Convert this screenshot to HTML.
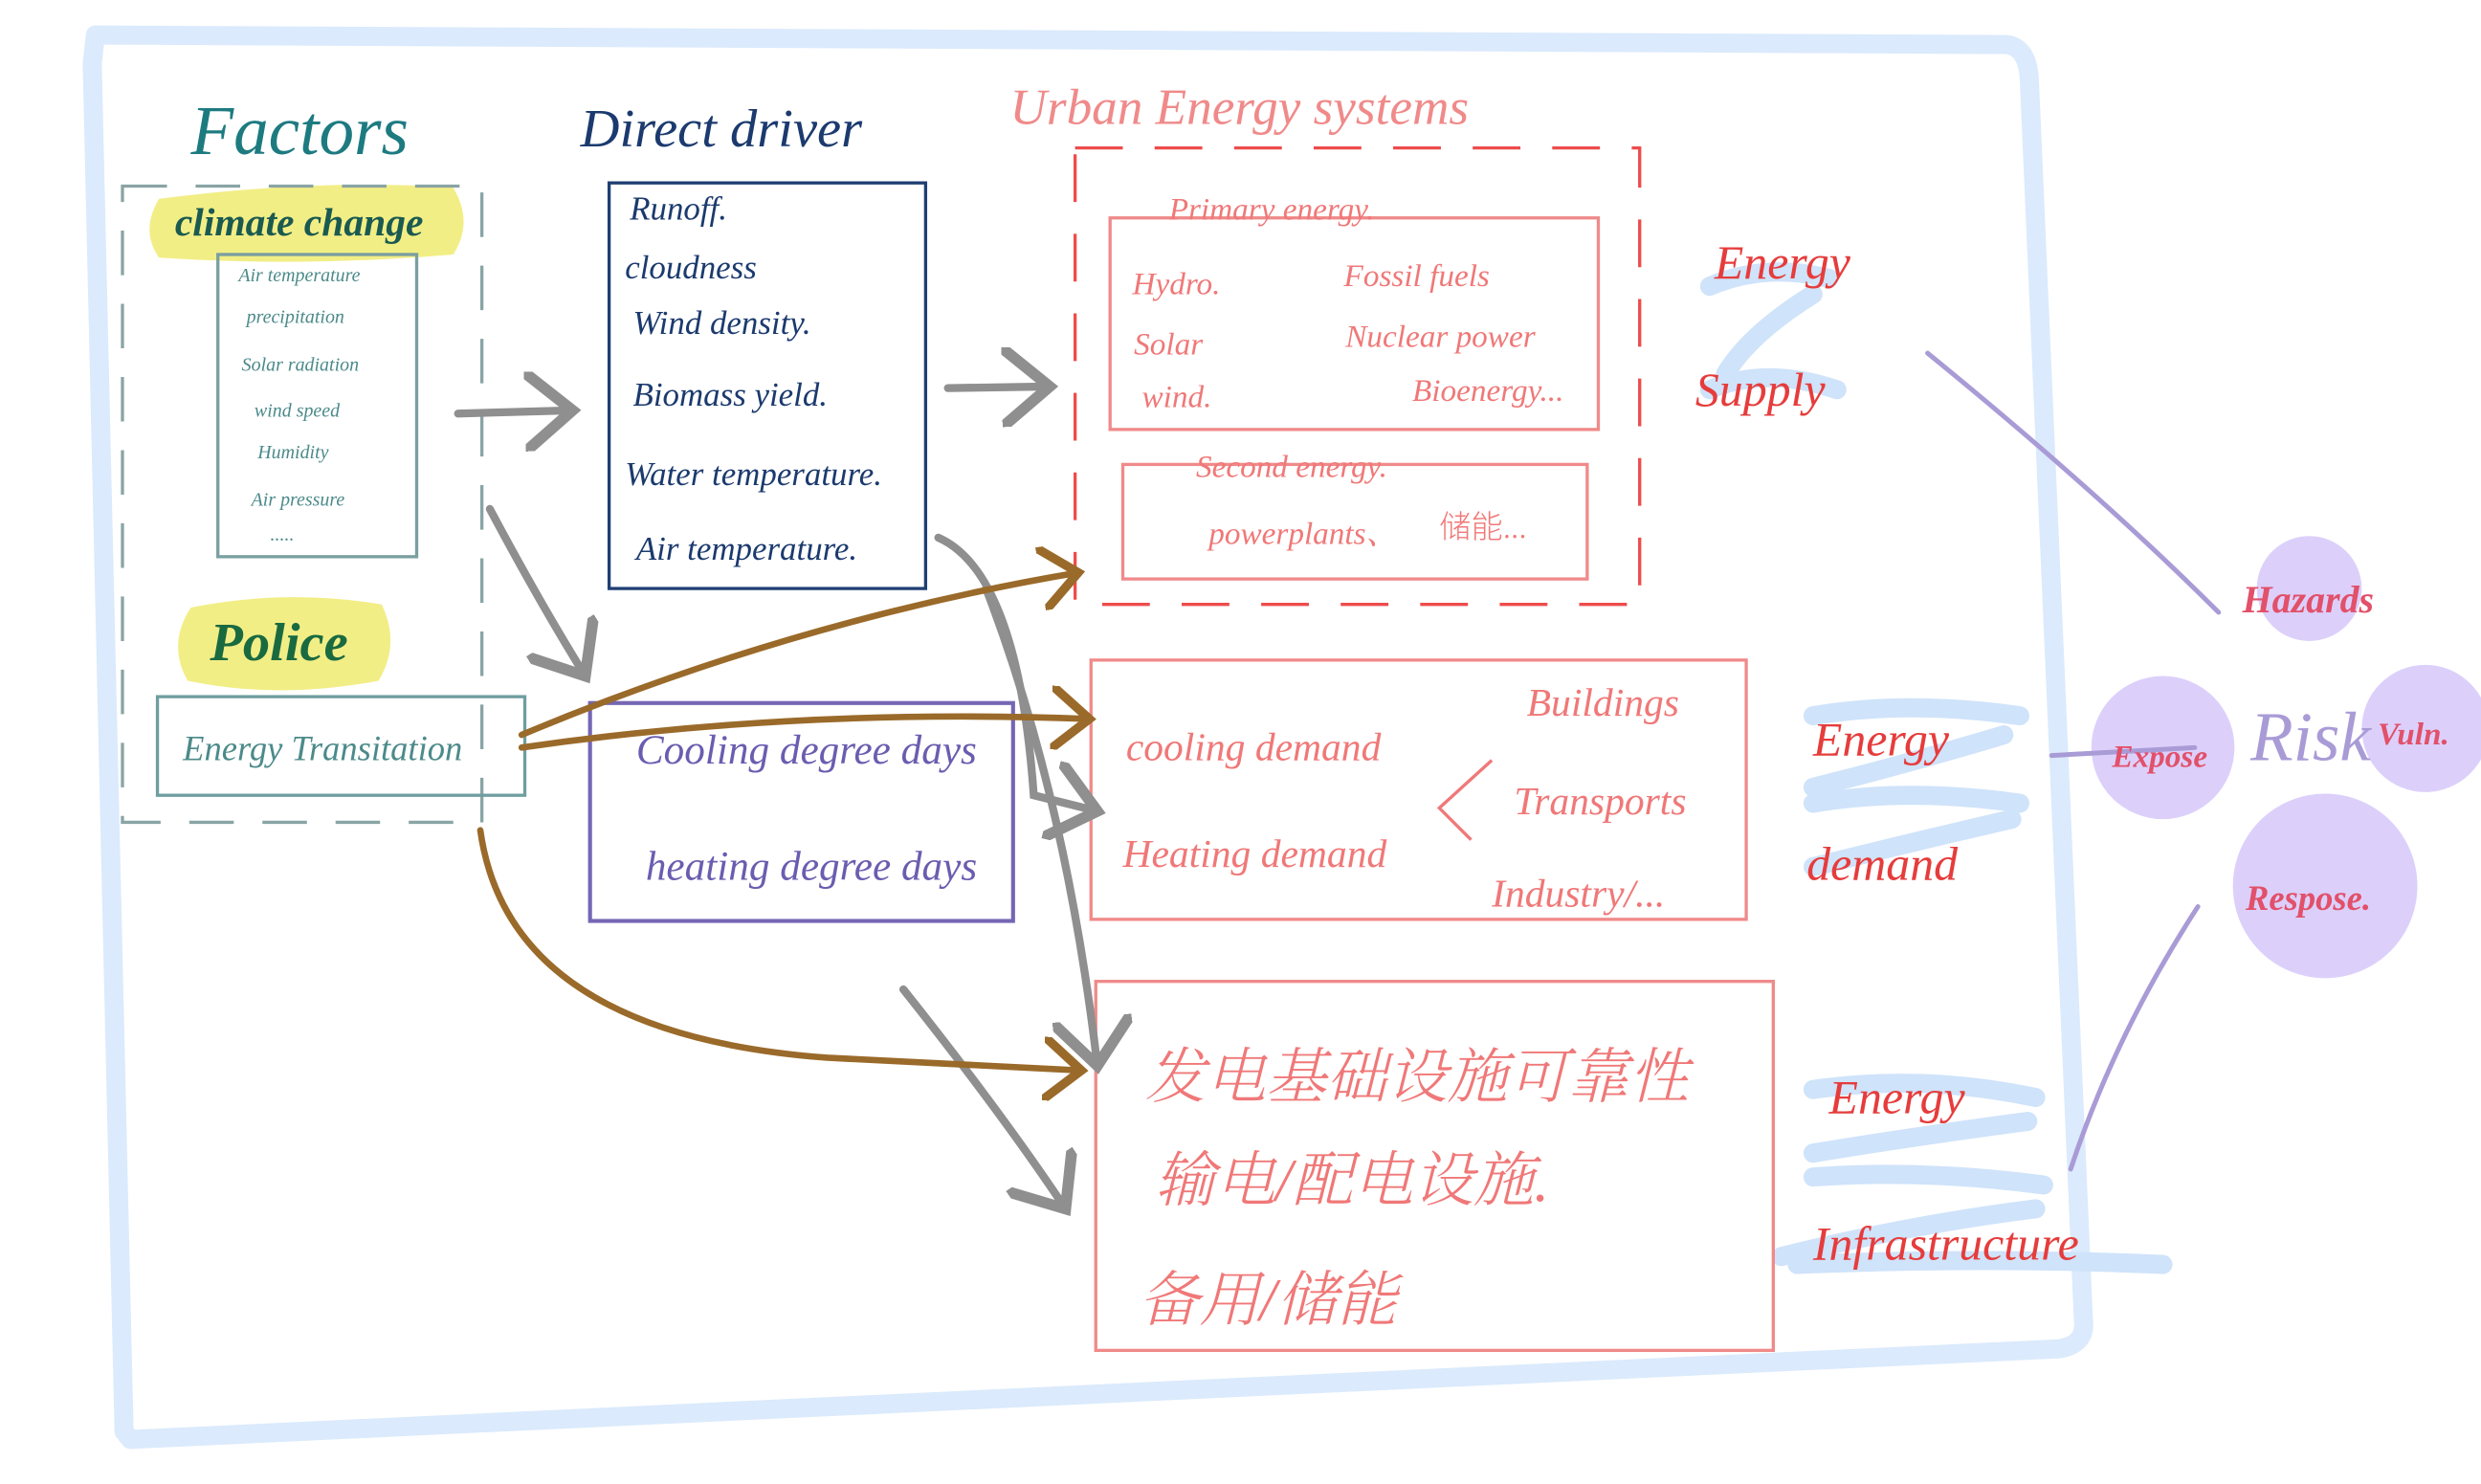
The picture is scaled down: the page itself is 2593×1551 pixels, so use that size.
<!DOCTYPE html>
<html><head><meta charset="utf-8"><style>
html,body{margin:0;padding:0;background:#fff;}
svg{display:block;}
text{font-family:"Liberation Serif","Noto Serif CJK SC",serif;font-style:italic;}
.cjk{font-family:"Noto Sans CJK SC","WenQuanYi Zen Hei",sans-serif;font-style:normal;font-weight:300;}
</style></head><body>
<svg width="2593" height="1551" viewBox="0 0 1560 933" preserveAspectRatio="none" xmlns="http://www.w3.org/2000/svg">
<defs>
<marker id="ag" markerWidth="10" markerHeight="10" refX="6" refY="5" orient="auto" markerUnits="strokeWidth"><path d="M0,0 L6,5 L0,10" fill="none" stroke="#8f8f8f" stroke-width="1.4"/></marker>
<marker id="ab" markerWidth="10" markerHeight="10" refX="6" refY="5" orient="auto" markerUnits="strokeWidth"><path d="M0,0 L6,5 L0,10" fill="none" stroke="#9a6a2a" stroke-width="1.4"/></marker>
</defs>
<!-- outer frame -->
<path d="M60,22 L1262,28 Q1275,30 1276,50 L1310,830 Q1312,845 1295,848 L82,905 L78,900 L58,40 Z" fill="none" stroke="#dbeafc" stroke-width="12" stroke-linejoin="round"/>
<!-- highlights -->
<path d="M100,125 Q200,112 285,118 Q298,140 285,160 Q190,168 100,162 Q88,145 100,125Z" fill="#f2ee86"/>
<path d="M120,382 Q180,370 240,380 Q252,405 238,428 Q175,440 118,428 Q105,405 120,382Z" fill="#f2ee86"/>
<!-- blue scribbles -->
<g fill="none" stroke="#cfe3fa" stroke-width="12" stroke-linecap="round">
<path d="M1075,180 Q1110,165 1150,175 M1140,185 Q1100,210 1085,235 M1075,245 Q1110,230 1155,245"/>
<path d="M1140,450 Q1200,440 1270,450 M1260,462 Q1200,480 1140,495 M1140,505 Q1200,495 1270,505 M1265,515 Q1200,530 1140,545"/>
<path d="M1140,685 Q1210,675 1280,690 M1275,705 Q1200,715 1140,725 M1140,740 Q1210,735 1285,745 M1280,760 Q1200,770 1120,790 M1130,795 Q1250,790 1360,795"/>
</g>
<!-- purple circles -->
<g fill="#dcd0fb">
<circle cx="1452" cy="370" r="33"/><circle cx="1360" cy="470" r="45"/><circle cx="1525" cy="458" r="40"/><circle cx="1462" cy="557" r="58"/>
</g>
<g fill="none" stroke="#a99bd6" stroke-width="3" stroke-linecap="round">
<path d="M1212,222 Q1320,310 1395,385"/><path d="M1382,570 Q1330,650 1302,735"/><path d="M1290,475 L1380,470"/>
</g>
<!-- left boxes -->
<rect x="77" y="117" width="226" height="400" fill="none" stroke="#8aa4a4" stroke-width="2" stroke-dasharray="28,18"/>
<rect x="137" y="160" width="125" height="190" fill="none" stroke="#7a9fa0" stroke-width="2"/>
<rect x="99" y="438" width="231" height="62" fill="none" stroke="#6f9ea0" stroke-width="2"/>
<rect x="383" y="115" width="199" height="255" fill="none" stroke="#1f3f74" stroke-width="2"/>
<rect x="371" y="442" width="266" height="137" fill="none" stroke="#7566b4" stroke-width="2.5"/>
<rect x="676" y="93" width="355" height="287" fill="none" stroke="#ee4c4c" stroke-width="2" stroke-dasharray="30,20"/>
<rect x="698" y="137" width="307" height="133" fill="none" stroke="#f08a8a" stroke-width="2"/>
<rect x="706" y="292" width="292" height="72" fill="none" stroke="#f08a8a" stroke-width="2"/>
<rect x="686" y="415" width="412" height="163" fill="none" stroke="#f08a8a" stroke-width="2"/>
<rect x="689" y="617" width="426" height="232" fill="none" stroke="#f08a8a" stroke-width="2"/>
<!-- arrows gray -->
<g fill="none" stroke="#8f8f8f" stroke-width="5" stroke-linecap="round">
<path d="M288,260 L360,258" marker-end="url(#ag)"/>
<path d="M308,320 Q340,380 368,425" marker-end="url(#ag)"/>
<path d="M596,244 L660,243" marker-end="url(#ag)"/>
<path d="M590,338 Q640,360 650,500 L690,510" marker-end="url(#ag)"/>
<path d="M620,370 Q670,500 690,670" marker-end="url(#ag)"/>
<path d="M568,622 Q630,700 670,760" marker-end="url(#ag)"/>
</g>
<g fill="none" stroke="#9a6a2a" stroke-width="4" stroke-linecap="round">
<path d="M328,462 Q500,390 678,360" marker-end="url(#ab)"/>
<path d="M328,470 Q500,445 685,452" marker-end="url(#ab)"/>
<path d="M302,522 Q320,650 520,665 L680,673" marker-end="url(#ab)"/>
</g>
<!-- texts -->
<text x="120" y="97" font-size="44" fill="#1d7b80">Factors</text>
<text x="365" y="92" font-size="34" fill="#1b3a6e">Direct driver</text>
<text x="635" y="78" font-size="32" fill="#f08a8a">Urban Energy systems</text>
<text x="110" y="148" font-size="25" fill="#1a5a50" font-weight="bold">climate change</text>
<g font-size="12" fill="#4c8a8a">
<text x="150" y="177">Air temperature</text><text x="155" y="203">precipitation</text><text x="152" y="233">Solar radiation</text><text x="160" y="262">wind speed</text><text x="162" y="288">Humidity</text><text x="158" y="318">Air pressure</text><text x="170" y="340">.....</text>
</g>
<text x="132" y="415" font-size="34" fill="#1a6a40" font-weight="bold">Police</text>
<text x="115" y="478" font-size="22" fill="#4c8a8a">Energy  Transitation</text>
<g font-size="21" fill="#1b3a6e">
<text x="396" y="138">Runoff.</text><text x="393" y="175">cloudness</text><text x="398" y="210">Wind density.</text><text x="398" y="255">Biomass yield.</text><text x="393" y="305">Water temperature.</text><text x="400" y="352">Air temperature.</text>
</g>
<g font-size="26" fill="#6a5db0">
<text x="400" y="480">Cooling degree days</text><text x="406" y="553">heating degree days</text>
</g>
<g font-size="20" fill="#f07878">
<text x="735" y="138">Primary  energy.</text>
<text x="712" y="185">Hydro.</text><text x="845" y="180">Fossil  fuels</text>
<text x="713" y="223">Solar</text><text x="846" y="218">Nuclear  power</text>
<text x="718" y="256">wind.</text><text x="888" y="252">Bioenergy...</text>
<text x="752" y="300">Second  energy.</text>
<text x="760" y="342">powerplants、</text><text class="cjk" x="905" y="338">储能...</text>
</g>
<g font-size="25" fill="#f07878">
<text x="708" y="478">cooling  demand</text><text x="706" y="545">Heating  demand</text>
<text x="960" y="450">Buildings</text><text x="952" y="512">Transports</text><text x="938" y="570">Industry/...</text>
</g>
<path d="M938,478 L905,508 L925,528" fill="none" stroke="#f07878" stroke-width="2"/>
<g class="cjk" font-size="38" fill="#f07878">
<text x="720" y="690">发电基础设施可靠性</text><text x="726" y="755">输电/配电设施.</text><text x="716" y="830">备用/储能</text>
</g>
<g font-size="30" fill="#e63c3c">
<text x="1078" y="175">Energy</text><text x="1066" y="255">Supply</text>
<text x="1140" y="475">Energy</text><text x="1136" y="553">demand</text>
<text x="1150" y="700">Energy</text><text x="1140" y="792">Infrastructure</text>
</g>
<g font-size="24" fill="#e2506a" font-weight="bold">
<text x="1410" y="385">Hazards</text><text x="1328" y="482" font-size="20">Expose</text><text x="1495" y="468" font-size="20">Vuln.</text><text x="1412" y="572" font-size="22">Respose.</text>
</g>
<text x="1415" y="478" font-size="44" fill="#a99bd6">Risk</text>
</svg>
</body></html>
